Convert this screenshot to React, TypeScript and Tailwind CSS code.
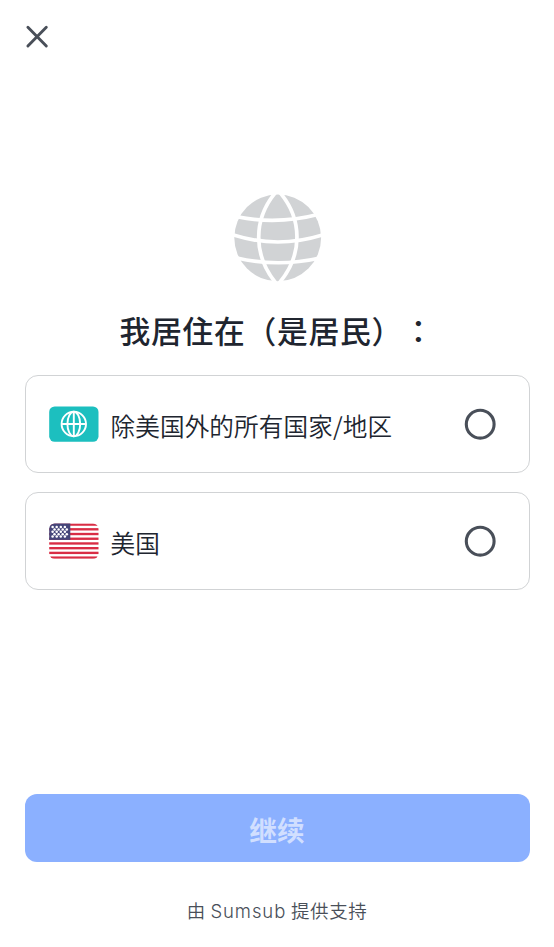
import { useState } from "react";
import type { ReactNode } from "react";

function GlobeIcon() {
    return (
        <svg className="w-[88px] h-[88px]" viewBox="0 0 88 88" fill="none">
            <circle cx="43.7" cy="43.8" r="43.4" fill="#d1d3d5" />
            <g stroke="#fff" strokeWidth="3.7">
                <path d="M43.7 -4 C18.4 24 18.4 62 43.5 91" />
                <path d="M43.7 -4 C69.4 24 69.4 62 43.5 91" />
                <path d="M3 22.8 Q44 31 86 20" />
                <path d="M-2 40.5 Q43.7 55.5 90 40.5" />
                <path d="M3 64 Q44 73.5 86 64" />
            </g>
        </svg>
    );
}

function WorldFlag() {
    return (
        <svg className="w-[50px] h-9 shrink-0" viewBox="0 0 50 36" fill="none">
            <rect x="0.2" y="0.4" width="49.3" height="35.4" rx="5.5" fill="#1cbfbf" />
            <g stroke="#fff" strokeWidth="1.9">
                <circle cx="24.8" cy="18" r="12.2" />
                <ellipse cx="24.8" cy="18" rx="6.4" ry="12.2" />
                <path d="M12.6 18 H37 M24.8 5.8 V30.2" />
            </g>
        </svg>
    );
}

function UsFlag() {
    const stripes = [0, 1, 2, 3, 4, 5, 6, 7];
    const rows = [0, 1, 2, 3, 4];
    return (
        <svg className="w-[50px] h-9 shrink-0" viewBox="0 0 50 36">
            <clipPath id="us-flag">
                <rect x="0.2" y="0.4" width="49.3" height="35.4" rx="5.5" />
            </clipPath>
            <g clipPath="url(#us-flag)">
                <rect width="50" height="36" fill="#fff" />
                {stripes.map((i) => (
                    <rect key={i} y={0.4 + i * 4.72} width="50" height="2.36" fill="#d92d45" />
                ))}
                <rect width="21.3" height="16.9" fill="#454579" />
                {rows.map((row) =>
                    [0, 1, 2, 3].map((col) => (
                        <circle
                            key={`${row}-${col}`}
                            cx={(row % 2 ? 5.5 : 3.6) + col * 4.1}
                            cy={4 + row * 2.4}
                            r="1.25"
                            fill="#fff"
                        />
                    ))
                )}
            </g>
        </svg>
    );
}

function Option({ icon, label, onSelect, selected }: { icon: ReactNode; label: string; onSelect: () => void; selected: boolean }) {
    return (
        <button
            type="button"
            role="radio"
            aria-checked={selected}
            onClick={onSelect}
            className="flex items-center w-full h-[98px] pl-[23px] pr-[33px] border-[1.5px] border-[#d1d3d5] rounded-[13px] text-left"
        >
            {icon}
            <span className="ml-3 mt-0.5 flex-1 text-[24.6px] leading-9 tracking-[0.12px] font-[350] text-[#20252f]">{label}</span>
            <svg className="w-8 h-8 shrink-0" viewBox="0 0 32 32">
                <circle cx="16.2" cy="16.2" r="13.9" fill="none" stroke="#494f59" strokeWidth="3.1" />
                {selected && <circle cx="16.2" cy="16.2" r="8" fill="#494f59" />}
            </svg>
        </button>
    );
}

export default function App() {
    const [country, setCountry] = useState("");

    return (
        <div className="flex flex-col w-full h-[947px] px-[24.5px] bg-white font-['Noto_Sans_CJK_JP',sans-serif] [text-spacing-trim:space-all]">
            <button type="button" aria-label="关闭" className="mt-6 w-[25px] h-[25px]">
                <svg viewBox="0 0 25 25" fill="none" stroke="#494f59" strokeWidth="2.9" strokeLinecap="round">
                    <path d="M2.9 3.3 L21.3 21.9 M21.3 3.3 L2.9 21.9" />
                </svg>
            </button>

            <div className="mt-[145px] pl-0.5 flex justify-center">
                <GlobeIcon />
            </div>
            <h1 className="mt-[25px] h-[46px] text-center text-[30.8px] leading-[46px] tracking-[0.72px] font-medium text-[#20252f] whitespace-nowrap">
                我居住在（是居民）：
            </h1>

            <div role="radiogroup" className="mt-[22px] flex flex-col gap-[19px]">
                <Option icon={<WorldFlag />} label="除美国外的所有国家/地区" selected={country === "other"} onSelect={() => setCountry("other")} />
                <Option icon={<UsFlag />} label="美国" selected={country === "us"} onSelect={() => setCountry("us")} />
            </div>

            <button type="button" className="mt-[204px] h-[67.5px] shrink-0 rounded-xl bg-[#8bb0ff] pt-0.5 text-[27.7px] leading-[60px] font-bold text-[#d1dfff]">
                继续
            </button>
            <p className="mt-[33px] text-center text-[18.5px] leading-[30px] tracking-[0.6px] font-[350] text-[#494f59]">
                由 <span className="font-['Inter',sans-serif] tracking-[0.9px]">Sumsub</span> 提供支持
            </p>
        </div>
    );
}
